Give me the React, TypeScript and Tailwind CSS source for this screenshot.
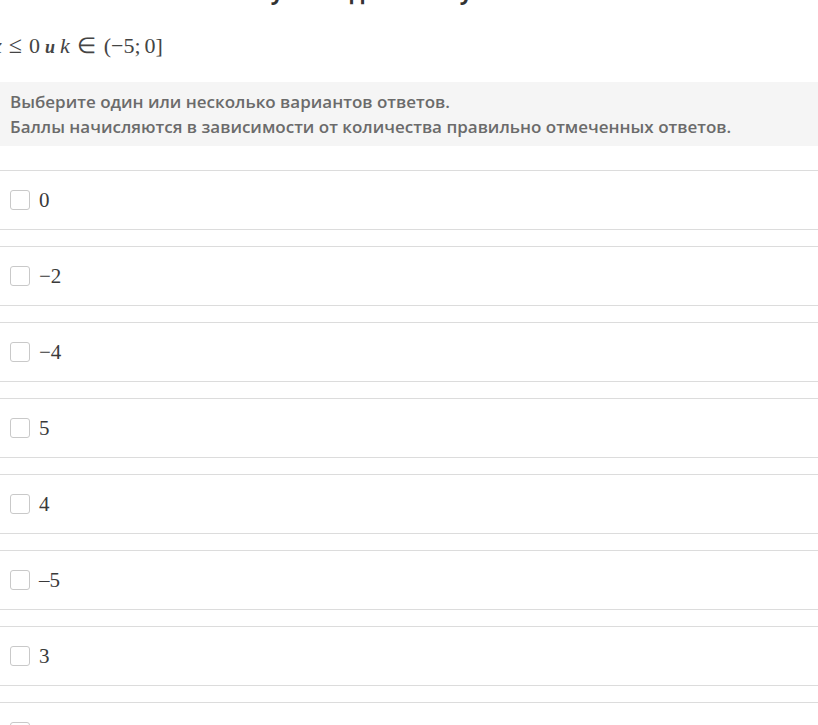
import React from "react";

const answers = ["0", "−2", "−4", "5", "4", "–5", "3", ""];

function Checkbox() {
  return <span className="block w-[20px] h-[20px] shrink-0 rounded-[3px] border border-[#c9c9c9] bg-white" />;
}

function AnswerRow({ value }: { value: string }) {
  return (
    <label className="flex items-center gap-[9px] h-[60px] border-y border-[#dcdcdc] px-[10px]">
      <Checkbox />
      <span className="text-[21px] leading-none text-[#3a3a3a] font-['Liberation_Serif',serif]">{value}</span>
    </label>
  );
}

export default function App() {
  return (
    <div className="w-[818px] h-[725px] overflow-hidden bg-white text-[#333] font-['Open_Sans',sans-serif]">
      {/* heading, scrolled mostly out of view */}
      <div className="h-[8px] overflow-hidden">
        <h2 className="mt-[-24px] ml-[-87px] text-[22px] leading-[30px] font-bold whitespace-nowrap">
          Отметьте все значения k если у = kx где x ≤ 0 и у &lt; 0
        </h2>
      </div>

      <div className="mt-[24px] ml-[-8px] flex items-baseline text-[22px] leading-[26px] text-[#444] whitespace-nowrap font-['Liberation_Serif',serif]">
        <i>x</i>
        <span className="ml-[7px] text-[24px]">≤</span>
        <span className="ml-[7px]">0</span>
        <b className="ml-[5px] text-[18px] italic">и</b>
        <i className="ml-[5px]">k</i>
        <span className="ml-[7px]">∈</span>
        <span className="ml-[8px]">(−5;</span>
        <span className="ml-[4px]">0]</span>
      </div>

      <div className="mt-[22px] bg-[#f5f5f5] px-[10px] pt-[7px] pb-[7px] text-[17px] leading-[25px] font-semibold text-[#6b6b6b]">
        <p>Выберите один или несколько вариантов ответов.</p>
        <p>Баллы начисляются в зависимости от количества правильно отмеченных ответов.</p>
      </div>

      <div className="mt-[24px] flex flex-col gap-[16px]">
        {answers.map((a, i) => (
          <AnswerRow key={i} value={a} />
        ))}
      </div>
    </div>
  );
}
